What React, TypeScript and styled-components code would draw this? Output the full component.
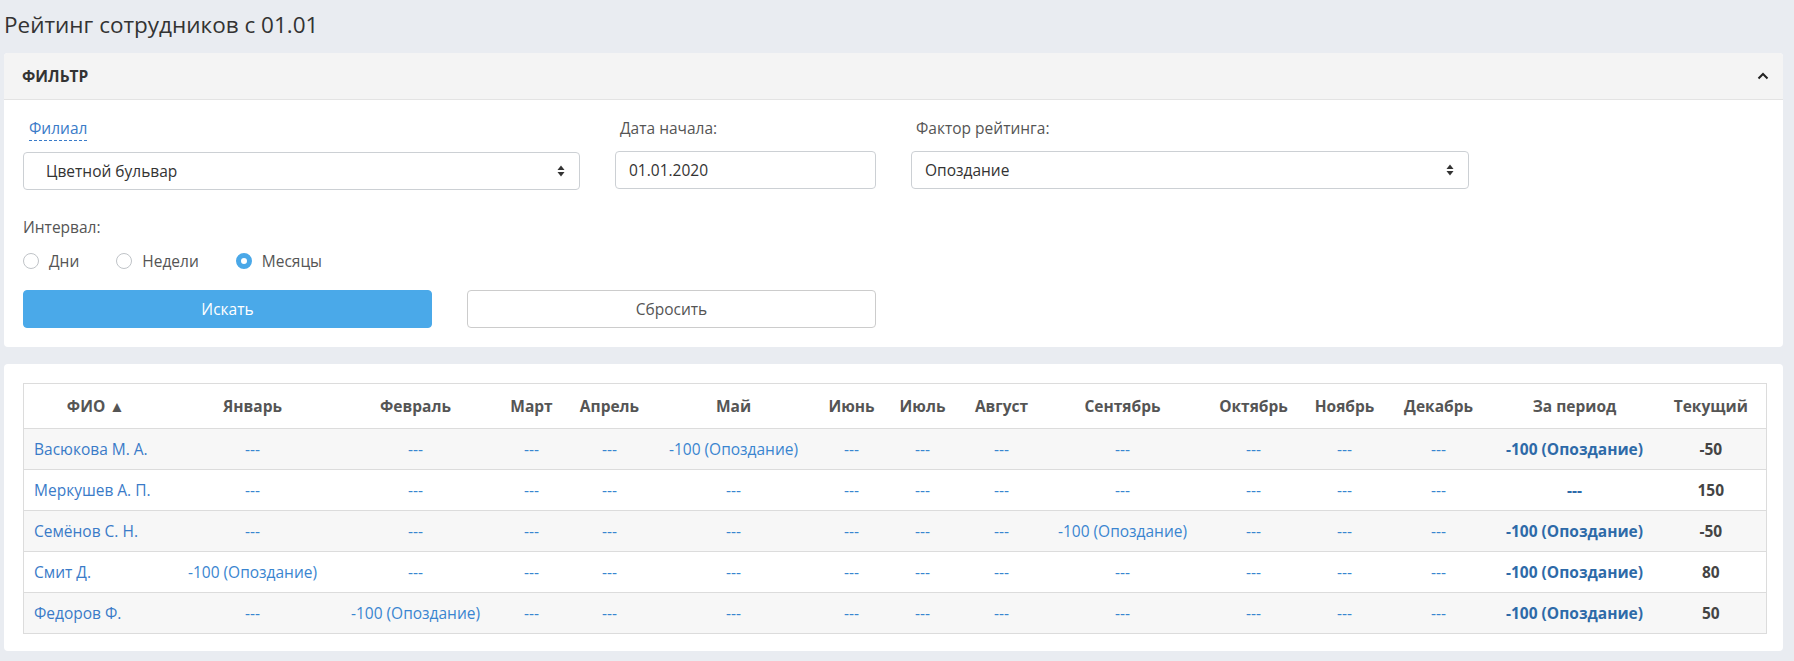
import React from 'react';
import styled, { createGlobalStyle } from 'styled-components';

const GlobalStyle = createGlobalStyle`
  html, body {
    margin: 0;
    padding: 0;
    background: #e9ecf1;
    font-family: 'Open Sans', 'Noto Sans', sans-serif;
    font-size: 15.5px;
    color: #555;
  }
`;

const Page = styled.div`
  width: 1779px;
  padding: 0 11px 10px 4px;
`;

const Title = styled.h1`
  margin: 0;
  height: 53px;
  display: flex;
  align-items: center;
  padding-bottom: 4px;
  box-sizing: border-box;
  font-size: 22.5px;
  font-weight: 400;
  color: #333;
`;

const Card = styled.section`
  background: #fff;
  border-radius: 4px;
  overflow: hidden;
  margin-bottom: 17px;
`;

const CardHeader = styled.div`
  height: 47px;
  box-sizing: border-box;
  background: #f4f4f4;
  border-bottom: 1px solid #e3e3e3;
  display: flex;
  align-items: center;
  justify-content: space-between;
  padding: 0 14px 0 18px;
`;

const CardTitle = styled.span`
  font-weight: 700;
  font-size: 15.5px;
  color: #333;
  text-transform: uppercase;
`;

const FilterBody = styled.div`
  padding: 16px 19px 19px 19px;
  display: flex;
  flex-direction: column;
`;

const FieldRow = styled.div`
  display: flex;
  gap: 35px;
`;

const Field = styled.div<{ w: number }>`
  width: ${(p) => p.w}px;
  display: flex;
  flex-direction: column;
`;

const Label = styled.label<{ link?: boolean }>`
  display: inline-block;
  align-self: flex-start;
  margin-left: ${(p) => (p.link ? 6 : 5)}px;
  height: 24px;
  line-height: 24px;
  margin-bottom: 11px;
  color: ${(p) => (p.link ? '#3a7bc8' : '#555')};
  border-bottom: ${(p) => (p.link ? '1px dashed #3a7bc8' : 'none')};
`;

const Control = styled.div<{ pad: number }>`
  height: 38px;
  box-sizing: border-box;
  border: 1px solid #ccd0d4;
  border-radius: 4px;
  display: flex;
  align-items: center;
  justify-content: space-between;
  padding: 0 14px 0 ${(p) => p.pad}px;
  color: #333;
  background: #fff;
`;

const IntervalBlock = styled.div`
  margin-top: 26px;
  display: flex;
  flex-direction: column;
`;

const IntervalLabel = styled.span`
  height: 22px;
  line-height: 22px;
  color: #555;
`;

const RadioRow = styled.div`
  display: flex;
  gap: 37px;
  margin-top: 12px;
  height: 22px;
  align-items: center;
`;

const RadioItem = styled.label`
  display: flex;
  align-items: center;
  gap: 10px;
  color: #555;
`;

const RadioCircle = styled.span<{ checked?: boolean }>`
  width: 16px;
  height: 16px;
  box-sizing: border-box;
  border-radius: 50%;
  border: ${(p) => (p.checked ? '5px solid #4aa8e8' : '1px solid #bfc3c7')};
  background: #fff;
`;

const ButtonRow = styled.div`
  display: flex;
  gap: 35px;
  margin-top: 18px;
`;

const Button = styled.button<{ primary?: boolean }>`
  width: 409px;
  height: 38px;
  border-radius: 4px;
  font-family: inherit;
  font-size: 15.5px;
  cursor: pointer;
  background: ${(p) => (p.primary ? '#4aa9e9' : '#fff')};
  color: ${(p) => (p.primary ? '#fff' : '#555')};
  border: 1px solid ${(p) => (p.primary ? '#4aa9e9' : '#cccccc')};
`;

const TableCard = styled(Card)`
  padding: 19px 17px 17px 19px;
  margin-bottom: 0;
`;

const Table = styled.table`
  width: 1743px;
  border-collapse: collapse;
  table-layout: fixed;
  border: 1px solid #dcdcdc;
`;

const Th = styled.th`
  height: 44px;
  padding: 0 4px;
  font-weight: 700;
  font-size: 15.5px;
  color: #555;
  text-align: center;
  border-bottom: 1px solid #dcdcdc;
  white-space: nowrap;
`;

const Row = styled.tr<{ striped: boolean }>`
  background: ${(p) => (p.striped ? '#f7f7f7' : '#fff')};
  border-bottom: 1px solid #dcdcdc;
`;

const Td = styled.td<{ kind: 'name' | 'cell' | 'total' | 'current' }>`
  height: 40px;
  padding: 0 4px;
  white-space: nowrap;
  text-align: ${(p) => (p.kind === 'name' ? 'left' : 'center')};
  padding-left: ${(p) => (p.kind === 'name' ? '10px' : '4px')};
  font-weight: ${(p) => (p.kind === 'total' || p.kind === 'current' ? 700 : 400)};
  color: ${(p) =>
    p.kind === 'name'
      ? '#3a7bc8'
      : p.kind === 'cell'
      ? '#3a85d0'
      : p.kind === 'total'
      ? '#2e6aa8'
      : '#444'};
`;

const SortArrows = () => (
  <svg width="8" height="12" viewBox="0 0 8 12">
    <path d="M4 0.5 L7.5 5 H0.5 Z" fill="#333" />
    <path d="M4 11.5 L7.5 7 H0.5 Z" fill="#333" />
  </svg>
);

const ChevronUp = () => (
  <svg width="12" height="8" viewBox="0 0 12 8">
    <path d="M1.5 6.5 L6 2 L10.5 6.5" fill="none" stroke="#222" strokeWidth="2" />
  </svg>
);

const MONTHS = [
  'Январь', 'Февраль', 'Март', 'Апрель', 'Май', 'Июнь', 'Июль',
  'Август', 'Сентябрь', 'Октябрь', 'Ноябрь', 'Декабрь',
];

const WIDTHS = [144, 170, 156, 76, 80, 168, 68, 74, 84, 158, 104, 78, 110, 162, 111];

const LATE = '-100 (Опоздание)';

const rows = [
  { name: 'Васюкова М. А.', late: 4, total: LATE, current: '-50' },
  { name: 'Меркушев А. П.', late: -1, total: '---', current: '150' },
  { name: 'Семёнов С. Н.', late: 8, total: LATE, current: '-50' },
  { name: 'Смит Д.', late: 0, total: LATE, current: '80' },
  { name: 'Федоров Ф.', late: 1, total: LATE, current: '50' },
];

export default function App() {
  return (
    <Page>
      <GlobalStyle />
      <Title>Рейтинг сотрудников с 01.01</Title>
      <Card>
        <CardHeader>
          <CardTitle>Фильтр</CardTitle>
          <ChevronUp />
        </CardHeader>
        <FilterBody>
          <FieldRow>
            <Field w={557}>
              <Label link>Филиал</Label>
              <Control pad={22}>
                Цветной бульвар
                <SortArrows />
              </Control>
            </Field>
            <Field w={261}>
              <Label>Дата начала:</Label>
              <Control pad={13}>01.01.2020</Control>
            </Field>
            <Field w={558}>
              <Label>Фактор рейтинга:</Label>
              <Control pad={13}>
                Опоздание
                <SortArrows />
              </Control>
            </Field>
          </FieldRow>
          <IntervalBlock>
            <IntervalLabel>Интервал:</IntervalLabel>
            <RadioRow>
              <RadioItem>
                <RadioCircle />
                Дни
              </RadioItem>
              <RadioItem>
                <RadioCircle />
                Недели
              </RadioItem>
              <RadioItem>
                <RadioCircle checked />
                Месяцы
              </RadioItem>
            </RadioRow>
          </IntervalBlock>
          <ButtonRow>
            <Button primary>Искать</Button>
            <Button>Сбросить</Button>
          </ButtonRow>
        </FilterBody>
      </Card>
      <TableCard>
        <Table>
          <colgroup>
            {WIDTHS.map((w, i) => (
              <col key={i} style={{ width: w }} />
            ))}
          </colgroup>
          <thead>
            <tr>
              <Th>ФИО ▲</Th>
              {MONTHS.map((m) => (
                <Th key={m}>{m}</Th>
              ))}
              <Th>За период</Th>
              <Th>Текущий</Th>
            </tr>
          </thead>
          <tbody>
            {rows.map((r, idx) => (
              <Row key={r.name} striped={idx % 2 === 0}>
                <Td kind="name">{r.name}</Td>
                {MONTHS.map((m, i) => (
                  <Td kind="cell" key={m}>
                    {i === r.late ? LATE : '---'}
                  </Td>
                ))}
                <Td kind="total">{r.total}</Td>
                <Td kind="current">{r.current}</Td>
              </Row>
            ))}
          </tbody>
        </Table>
      </TableCard>
    </Page>
  );
}
